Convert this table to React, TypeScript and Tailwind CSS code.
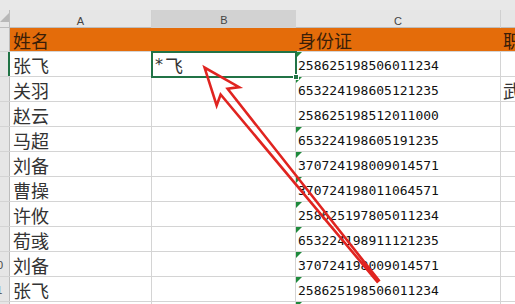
import React from 'react'

const rows = [
  { name: '张飞', id: '258625198506011234', flag: true, d: '' },
  { name: '关羽', id: '653224198605121235', flag: true, d: '武' },
  { name: '赵云', id: '258625198512011000', flag: false, d: '' },
  { name: '马超', id: '653224198605191235', flag: true, d: '' },
  { name: '刘备', id: '370724198009014571', flag: true, d: '' },
  { name: '曹操', id: '370724198011064571', flag: true, d: '' },
  { name: '许攸', id: '258625197805011234', flag: true, d: '' },
  { name: '荀彧', id: '653224198911121235', flag: true, d: '' },
  { name: '刘备', id: '370724198009014571', flag: true, d: '' },
  { name: '张飞', id: '258625198506011234', flag: true, d: '' },
  { name: '', id: '', flag: true, d: '' },
]

const cjk = "font-['Noto_Sans_CJK_SC',sans-serif]"
const mono = "font-['DejaVu_Sans_Mono',monospace]"

const Flag = () => (
  <span className="absolute left-0 top-0 w-0 h-0 border-t-[6px] border-r-[6px] border-t-[#1e8a3c] border-r-transparent" />
)

const Arrow = () => (
  <svg className="absolute inset-0 pointer-events-none" width="515" height="304">
    <g transform="translate(378 281) rotate(-129.1)">
      <polygon
        points="0,-1 244,-4.5 238,-14.5 275,0 238,14.5 244,4.5 0,1"
        fill="none"
        stroke="#e02420"
        strokeWidth="2.6"
        strokeLinejoin="miter"
      />
    </g>
  </svg>
)

export default function App() {
  return (
    <div className="relative w-[515px] h-[304px] overflow-hidden bg-white text-[#333]">
      {/* top strip */}
      <div className="h-[10px] bg-[#e8e8e8]" />

      {/* column headers */}
      <div className="grid grid-cols-[10px_142px_144px_205px_1fr] h-[18px] bg-[#e6e6e6] border-b border-[#bdbdbd] text-[11px] font-['Liberation_Sans',sans-serif] text-[#444]">
        <div className="relative border-r border-[#bdbdbd]">
          <span className="absolute left-0 top-[3px] w-0 h-0 border-b-[9px] border-l-[9px] border-b-[#b8b8b8] border-l-transparent" />
        </div>
        <div className="flex items-center justify-center border-r border-[#d0d0d0] pt-[2px]">A</div>
        <div className="flex items-center justify-center bg-[#d2d2d2] border-b-2 border-[#217346] pt-[2px]">B</div>
        <div className="flex items-center justify-center border-r border-[#d0d0d0] pt-[2px]">C</div>
        <div />
      </div>

      {/* header row */}
      <div className={`grid grid-cols-[10px_1fr] h-[24px] border-b border-[#d4d4d4] ${cjk}`}>
        <div className="bg-[#e6e6e6] border-r border-[#bdbdbd]" />
        <div className="grid grid-cols-[142px_144px_205px_1fr] bg-[#e46c0a] text-[18px] leading-none text-[#3a1e08]">
          <div className="flex items-end pl-[3px] pb-[2px]">姓名</div>
          <div />
          <div className="flex items-end pl-[2px] pb-[2px]">身份证</div>
          <div className="flex items-end pl-[2px] pb-[2px] overflow-hidden">职</div>
        </div>
      </div>

      {/* data rows */}
      {rows.map((r, i) => (
        <div key={i} className="grid grid-cols-[10px_142px_144px_205px_1fr] h-[25px] border-b border-[#d4d4d4]">
          <div
            className={`relative overflow-hidden bg-[#e6e6e6] border-r ${i === 0 ? 'border-r-2 border-[#217346]' : 'border-[#bdbdbd]'}`}
          >
            {i + 2 >= 10 && (
              <span className="absolute left-[-9px] bottom-[5px] text-[11px] leading-none font-['Liberation_Sans',sans-serif] text-[#444]">
                {i + 2}
              </span>
            )}
          </div>
          <div className={`flex items-end pl-[3px] pb-[2px] text-[18px] leading-none border-r border-[#d4d4d4] ${cjk}`}>
            {r.name}
          </div>
          <div className={`flex items-end pl-[3px] pb-[2px] text-[18px] leading-none border-r border-[#d4d4d4] ${cjk}`}>
            {i === 0 ? (
              <>
                <span className="font-['DejaVu_Sans',sans-serif] text-[16px] mr-[2px] mb-[1px]">*</span>飞
              </>
            ) : null}
          </div>
          <div className={`relative flex items-end pl-[2px] pb-[4px] text-[13px] leading-none text-[#111] border-r border-[#d4d4d4] ${mono}`}>
            {r.flag && <Flag />}
            {r.id}
          </div>
          <div className={`flex items-end pl-[2px] pb-[2px] text-[18px] leading-none overflow-hidden ${cjk}`}>
            {r.d}
          </div>
        </div>
      ))}

      {/* active cell B2 */}
      <div className="absolute left-[151px] top-[51px] w-[146px] h-[27px] border-2 border-[#217346] pointer-events-none">
        <span className="absolute -right-[4px] -bottom-[4px] w-[6px] h-[6px] bg-[#217346] border border-white" />
      </div>

      <Arrow />
    </div>
  )
}
